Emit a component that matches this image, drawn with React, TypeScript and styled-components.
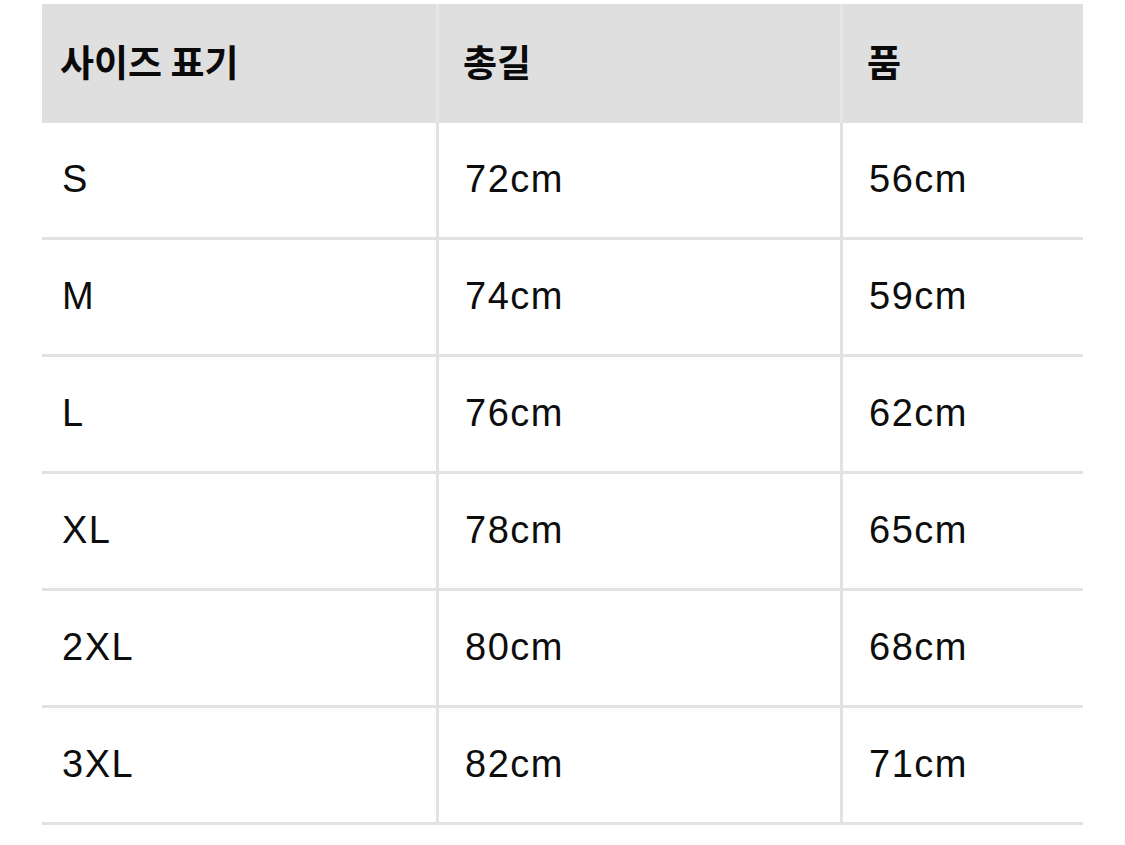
import styled, { createGlobalStyle } from "styled-components";

const GlobalStyle = createGlobalStyle`
  html, body {
    margin: 0;
    padding: 0;
    background: #ffffff;
  }
  body {
    font-family: "Liberation Sans", "Noto Sans CJK KR", Arial, sans-serif;
    color: #111111;
  }
`;

const Page = styled.div`
  width: 1125px;
  height: 845px;
  padding: 4px 0 0 42px;
  box-sizing: border-box;
`;

const Table = styled.div`
  display: grid;
  grid-template-columns: 394px 404px 243px;
  width: 1041px;
`;

const HeadCell = styled.div<{ $first?: boolean }>`
  height: 119px;
  display: flex;
  align-items: center;
  box-sizing: border-box;
  background: #dfdfdf;
  border-left: ${(p) => (p.$first ? "none" : "3px solid #e6e6e6")};
  padding-left: ${(p) => (p.$first ? "18px" : "24px")};
  padding-bottom: 6px;
  font-family: "Noto Sans CJK KR", "Liberation Sans", sans-serif;
  font-weight: 700;
  font-size: 37px;
  color: #0a0a0a;
`;

const Cell = styled.div<{ $first?: boolean }>`
  height: 117px;
  display: flex;
  align-items: center;
  box-sizing: border-box;
  border-bottom: 3px solid #e2e2e2;
  border-left: ${(p) => (p.$first ? "none" : "3px solid #e2e2e2")};
  padding-left: ${(p) => (p.$first ? "20px" : "26px")};
  padding-bottom: 2px;
  font-size: 38px;
  letter-spacing: 1.5px;
  color: #0d0d0d;
`;

const headers = ["사이즈 표기", "총길", "품"];

const rows = [
  ["S", "72cm", "56cm"],
  ["M", "74cm", "59cm"],
  ["L", "76cm", "62cm"],
  ["XL", "78cm", "65cm"],
  ["2XL", "80cm", "68cm"],
  ["3XL", "82cm", "71cm"],
];

export default function App() {
  return (
    <>
      <GlobalStyle />
      <Page>
        <Table>
          {headers.map((h, i) => (
            <HeadCell key={h} $first={i === 0}>
              {h}
            </HeadCell>
          ))}
          {rows.map((row) =>
            row.map((v, i) => (
              <Cell key={row[0] + i} $first={i === 0}>
                {v}
              </Cell>
            ))
          )}
        </Table>
      </Page>
    </>
  );
}
